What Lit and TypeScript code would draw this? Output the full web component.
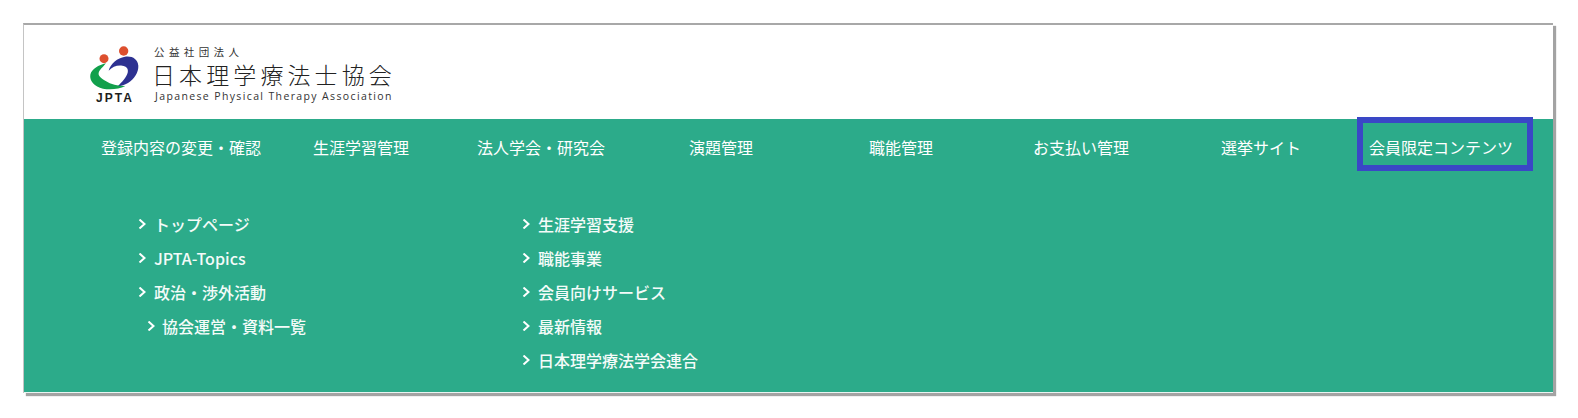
import { LitElement, html, css, svg } from "lit";
import { customElement } from "lit/decorators.js";

const NAV = ["登録内容の変更・確認", "生涯学習管理", "法人学会・研究会", "演題管理", "職能管理", "お支払い管理", "選挙サイト", "会員限定コンテンツ"];
const LEFT = ["トップページ", "JPTA-Topics", "政治・渉外活動", "協会運営・資料一覧"];
const RIGHT = ["生涯学習支援", "職能事業", "会員向けサービス", "最新情報", "日本理学療法学会連合"];

const mark = svg`
  <circle cx="72" cy="56" r="13.500" fill="#dd4f2e"/>
  <circle cx="131" cy="33" r="14" fill="#dd4f2e"/>
  <path d="M86 92C92 70 112 54 135 50C157 47 173 57 175 77C176 97 162 118 144 129C134 135 124 138 113 139C126 126 139 112 143 98C146 86 139 78 127 77C111 75 97 80 86 92Z" fill="#2d3191"/>
  <path d="M78 70C56 75 35 87 31 104C28 122 43 139 69 146C90 150 117 148 136 138C113 138 92 133 77 123C63 114 54 108 56 99C58 90 67 83 78 70Z" fill="#12a04c"/>
`;

@customElement("app-root")
export class AppRoot extends LitElement {
  static styles = css`
    :host {
      display: block;
      box-sizing: border-box;
      width: 1578px;
      height: 418px;
      padding: 23px 25px 25px 23px;
      background: #fff;
      font-family: "Noto Sans CJK JP", "Noto Sans", sans-serif;
    }
    .frame {
      height: 100%;
      box-sizing: border-box;
      border-top: 2px solid #a8a8a8;
      border-left: 1px solid #c4c4c4;
      box-shadow: 3px 3px 1px #a3a3a3;
      display: flex;
      flex-direction: column;
    }
    .head {
      height: 94px;
      flex: none;
      display: flex;
      align-items: flex-start;
      padding: 15px 0 0 56px;
      box-sizing: border-box;
    }
    .mark { display: flex; flex-direction: column; align-items: center; width: 70px; }
    .mark svg { display: block; }
    .jpta {
      font: 700 12px/12px "Liberation Sans", sans-serif;
      letter-spacing: 2px;
      color: #1d1d1d;
      margin-top: 2px;
    }
    .names { display: flex; flex-direction: column; color: #333; margin: 5px 0 0 5px; }
    .corp { font-size: 10.500px; line-height: 13px; letter-spacing: 4.400px; margin-left: -1px; }
    .ja { font-size: 23px; font-weight: 300; line-height: 30px; letter-spacing: 4.100px; white-space: nowrap; color: #222; margin: 1px 0 0 -3px; }
    .en { font: 400 10.500px/13px "Open Sans", sans-serif; letter-spacing: 1.370px; white-space: nowrap; margin-top: 1px; }
    .body {
      flex: 1;
      background: #2cab8a;
      border-bottom: 1px solid #eaf5f2;
      position: relative;
      padding: 0 0 0 67px;
    }
    .nav {
      display: grid;
      grid-template-columns: repeat(8, 180px);
      height: 55px;
      align-items: center;
      color: #fff;
      font-size: 16px;
      font-weight: 400;
      text-align: center;
    }
    .nav div { white-space: nowrap; }
    .highlight {
      position: absolute;
      left: 1333px;
      top: -2px;
      width: 176px;
      height: 54px;
      box-sizing: border-box;
      border: 6px solid #3a47c6;
      pointer-events: none;
    }
    .sub {
      display: flex;
      padding-top: 33px;
      color: #f4fbf9;
      font-size: 16px;
      font-weight: 500;
    }
    .col { display: flex; flex-direction: column; }
    .col.left { width: 431px; padding-left: 47px; box-sizing: border-box; }
    .row {
      height: 34px;
      display: flex;
      align-items: center;
      gap: 8px;
      white-space: nowrap;
    }
    .row.indent { padding-left: 9px; gap: 7px; }
    .row svg { flex: none; display: block; }
  `;

  private row(t: string, indent = false) {
    return html`<div class="row ${indent ? "indent" : ""}">
      <svg width="8" height="10" viewBox="0 0 8 10"><path d="M1.500 .5L6.500 5L1.500 9.500" fill="none" stroke="#fff" stroke-width="2"/></svg>
      <span>${t}</span>
    </div>`;
  }

  render() {
    return html`<div class="frame">
      <div class="head">
        <div class="mark">
          <svg width="70" height="50" viewBox="0 0 210 150">${mark}</svg>
          <div class="jpta">JPTA</div>
        </div>
        <div class="names">
          <div class="corp">公益社団法人</div>
          <div class="ja">日本理学療法士協会</div>
          <div class="en">Japanese Physical Therapy Association</div>
        </div>
      </div>
      <div class="body">
        <div class="nav">${NAV.map((n) => html`<div>${n}</div>`)}</div>
        <div class="highlight"></div>
        <div class="sub">
          <div class="col left">${LEFT.map((t, i) => this.row(t, i === 3))}</div>
          <div class="col">${RIGHT.map((t) => this.row(t))}</div>
        </div>
      </div>
    </div>`;
  }
}
